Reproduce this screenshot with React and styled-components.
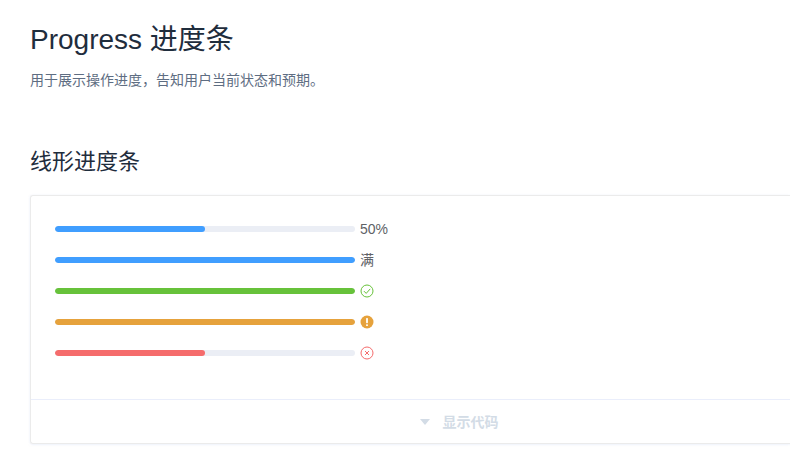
import React from "react";
import styled, { createGlobalStyle } from "styled-components";

const GlobalStyle = createGlobalStyle`
  html, body {
    margin: 0;
    padding: 0;
    background: #fff;
    overflow: hidden;
    height: 455px;
    font-family: "Liberation Sans", "Noto Sans CJK SC", sans-serif;
  }
`;

const Page = styled.div`
  width: 790px;
  padding: 23px 0 0 30px;
  box-sizing: border-box;
`;

const Title = styled.h2`
  margin: 0;
  font-size: 28px;
  line-height: 34px;
  font-weight: 400;
  color: #1f2d3d;
`;

const Lead = styled.p`
  margin: 13px 0 0;
  font-size: 14px;
  line-height: 20px;
  color: #5e6d82;
`;

const Section = styled.h3`
  margin: 57px 0 0;
  font-size: 22px;
  line-height: 30px;
  font-weight: 400;
  color: #1f2d3d;
`;

// the card runs on past the window in the reference, so no right border here
const Demo = styled.div`
  margin-top: 18px;
  border: 1px solid #ebebeb;
  border-right: none;
  border-radius: 3px 0 0 3px;
  box-shadow: 0 0 2px rgba(232, 237, 250, 0.6), 0 1px 2px rgba(232, 237, 250, 0.5);
`;

const Source = styled.div`
  height: 203px;
  padding: 25px 24px 0;
  box-sizing: border-box;
`;

const Row = styled.div`
  display: flex;
  align-items: center;
  width: 350px;
  height: 16px;
  margin-bottom: 15px;
`;

const Track = styled.div`
  width: 300px;
  height: 6px;
  border-radius: 3px;
  background: #ebeef5;
  overflow: hidden;
`;

const Fill = styled.div`
  height: 100%;
  border-radius: 3px;
  background: ${(p) => p.$color};
`;

const Label = styled.span`
  margin-left: 5px;
  display: flex;
  align-items: center;
  font-size: 14px;
  line-height: 16px;
  color: #606266;
`;

const Footer = styled.div`
  height: 44px;
  border-top: 1px solid #eaeefb;
  display: flex;
  align-items: center;
  justify-content: center;
  gap: 13px;
  box-sizing: border-box;
  padding: 0 0 2px 97px;
  color: #d3dce6;
  font-size: 14px;
  font-weight: 700;
`;

const Caret = styled.i`
  width: 0;
  height: 0;
  border-left: 5.5px solid transparent;
  border-right: 5.5px solid transparent;
  border-top: 6px solid #d3dce6;
  margin-top: 2px;
`;

const CheckIcon = () => (
  <svg width="14" height="14" viewBox="0 0 14 14" fill="none" stroke="#67c23a" strokeWidth="1">
    <circle cx="7" cy="7" r="6" />
    <path d="M3.9 7.1 L6.2 9.4 L10.2 4.9" />
  </svg>
);

const WarnIcon = () => (
  <svg width="14" height="14" viewBox="0 0 14 14">
    <circle cx="7" cy="7" r="6.5" fill="#e6a23c" />
    <rect x="6.1" y="3" width="1.8" height="5.2" rx="0.6" fill="#fff" />
    <rect x="6.1" y="9.2" width="1.8" height="1.8" rx="0.6" fill="#fff" />
  </svg>
);

const CrossIcon = () => (
  <svg width="14" height="14" viewBox="0 0 14 14" fill="none" stroke="#f56c6c" strokeWidth="1">
    <circle cx="7" cy="7" r="6" />
    <path d="M5 5 L9 9 M9 5 L5 9" />
  </svg>
);

const BARS = [
  { pct: 50, color: "#409eff", label: "50%" },
  { pct: 100, color: "#409eff", label: "满" },
  { pct: 100, color: "#67c23a", label: <CheckIcon /> },
  { pct: 100, color: "#e6a23c", label: <WarnIcon /> },
  { pct: 50, color: "#f56c6c", label: <CrossIcon /> },
];

const App = () => (
  <>
    <GlobalStyle />
    <Page>
      <Title>Progress 进度条</Title>
      <Lead>用于展示操作进度，告知用户当前状态和预期。</Lead>
      <Section>线形进度条</Section>
      <Demo>
        <Source>
          {BARS.map((bar, i) => (
            <Row key={i}>
              <Track>
                <Fill $color={bar.color} style={{ width: `${bar.pct}%` }} />
              </Track>
              <Label>{bar.label}</Label>
            </Row>
          ))}
        </Source>
        <Footer>
          <Caret />
          <span>显示代码</span>
        </Footer>
      </Demo>
    </Page>
  </>
);

export default App;
